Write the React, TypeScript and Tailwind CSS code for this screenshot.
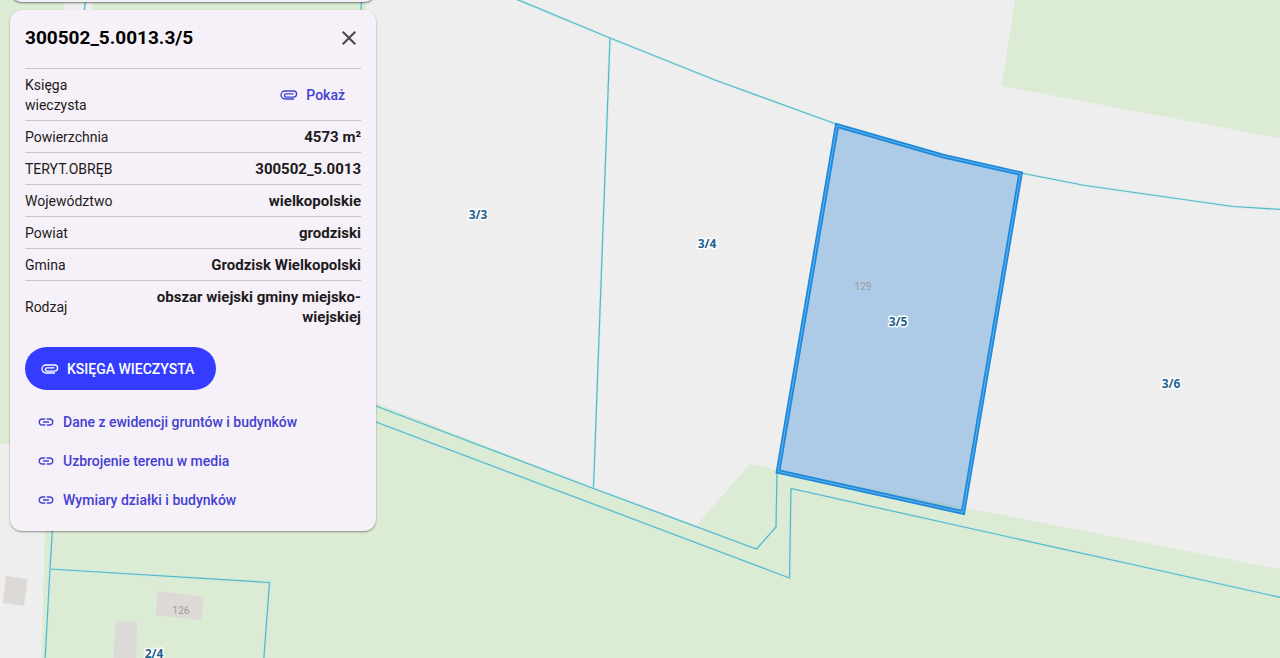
import { MdClose, MdLink } from 'react-icons/md';

const parcel = [
  { label: 'Powierzchnia', value: '4573 m²' },
  { label: 'TERYT.OBRĘB', value: '300502_5.0013' },
  { label: 'Województwo', value: 'wielkopolskie' },
  { label: 'Powiat', value: 'grodziski' },
  { label: 'Gmina', value: 'Grodzisk Wielkopolski' },
  { label: 'Rodzaj', value: 'obszar wiejski gminy miejsko-wiejskiej' },
];

const links = ['Dane z ewidencji gruntów i budynków', 'Uzbrojenie terenu w media', 'Wymiary działki i budynków'];

const boundaries = [
  'M516 -1 L610 38 L715 80 L836 124',
  'M1021 173 L1085 185.5 L1233 206.5 L1290 210',
  'M610 38 L593.5 488',
  'M360 400 L593.5 488.5 L756.5 549 L776 527 L777 472',
  'M360 416 L789.5 578 L791 488.5 L1290 599.5',
  'M53 520 L50 569 L44.5 670',
  'M50 569 L269.5 582.5 L263 670',
  'M86 -2 L84 12',
  'M361.5 -2 L361 12',
];

const parcelLabels = [
  { x: 478, y: 219, text: '3/3' },
  { x: 707, y: 248, text: '3/4' },
  { x: 898, y: 326, text: '3/5' },
  { x: 1171, y: 388, text: '3/6' },
  { x: 154, y: 658, text: '2/4' },
];

const selected = 'M837 125.5 L943 156 L1020.5 173.5 L963 512.5 L778 471.5 Z';

export default function App() {
  return (
    <main className="relative min-h-screen overflow-hidden bg-[#eeeeee] font-[Roboto,sans-serif]">
      <ParcelMap />
      <aside className="relative ml-2.5 flex w-[366px] max-w-full flex-col gap-2 pb-4">
        <div className="-mt-8 h-[34px] rounded-xl bg-[#f6f1f8] shadow-[0_1px_2px_rgba(0,0,0,0.5)]" />
        <ParcelCard />
      </aside>
    </main>
  );
}

function ParcelCard() {
  return (
    <section className="rounded-xl bg-[#f6f1f8] px-[15px] pb-3 pt-3 shadow-[0_1px_2px_rgba(0,0,0,0.4)]">
      <header className="flex items-center justify-between pb-3.5">
        <h1 className="text-[19px] font-bold leading-8 text-black">300502_5.0013.3/5</h1>
        <button type="button" aria-label="Zamknij" className="text-[#49454f]">
          <MdClose size={24} />
        </button>
      </header>

      <table className="w-full border-separate border-spacing-0 text-sm leading-5 text-[#1d1b20]">
        <tbody>
          <tr>
            <th scope="row" className="w-[88px] border-t border-[#c6c1ca] pb-[5px] pt-1.5 text-left font-normal">
              Księga wieczysta
            </th>
            <td className="border-t border-[#c6c1ca] pr-4 text-right">
              <button type="button" className="inline-flex items-center gap-2 align-middle font-medium text-[#4340d2]">
                <Clip />
                Pokaż
              </button>
            </td>
          </tr>
          {parcel.map(({ label, value }) => (
            <tr key={label}>
              <th scope="row" className="border-t border-[#c6c1ca] pb-[5px] pt-1.5 text-left font-normal">
                {label}
              </th>
              <td className="border-t border-[#c6c1ca] pb-[5px] pl-8 pt-1.5 text-right text-[15px] font-bold leading-5">
                {value}
              </td>
            </tr>
          ))}
        </tbody>
      </table>

      <button
        type="button"
        className="mt-[15px] flex h-[43px] items-center gap-2 rounded-full bg-[#343dff] pl-4 pr-[22px] text-sm font-medium text-white"
      >
        <Clip />
        KSIĘGA WIECZYSTA
      </button>

      <ul className="mt-3">
        {links.map((text) => (
          <li key={text}>
            <a href="#" className="flex h-[39px] items-center gap-2 pl-3 text-sm font-medium text-[#4340d2]">
              <MdLink size={18} />
              {text}
            </a>
          </li>
        ))}
      </ul>
    </section>
  );
}

// Thin horizontal paperclip
function Clip() {
  return (
    <svg width="18" height="18" viewBox="0 0 18 18" fill="none" stroke="currentColor" strokeWidth={1.3} aria-hidden="true">
      <path d="M14 13H5A4 4 0 0 1 5 5H13.500A3.100 3.100 0 0 1 13.500 11.200H6A1.650 1.650 0 0 1 6 7.900H13.500" />
    </svg>
  );
}

function ParcelMap() {
  return (
    <svg className="absolute inset-0 h-full w-full" viewBox="0 0 1280 658" preserveAspectRatio="xMinYMin slice">
      {/* Land cover */}
      <g fill="#dbebd4">
        <path d="M0 0 H64 V444 H0 Z" />
        <path d="M92 0 H366 V100 H92 Z" />
        <path d="M1015 0 H1290 V140 L1002 86 Z" />
        <path d="M52 280 L376 403 L695 527 L750 464 L778 470 L966 508 L1290 571 V670 H41 Z" />
      </g>

      {/* Buildings */}
      <g fill="#ddd9d6">
        <path d="M6 576 L27.500 579 L24 606 L3 603 Z" />
        <path d="M157 591 L203.500 596.500 L201 620 L156 615.500 Z" />
        <path d="M115.500 621 L137 622 L136 670 H113 Z" />
      </g>

      {/* Parcel boundaries */}
      <g fill="none">
        {boundaries.map((d) => (
          <g key={d}>
            <path d={d} stroke="#bdf0ea" strokeOpacity={0.5} strokeWidth={3} />
            <path d={d} stroke="#5ab4c6" strokeWidth={1.2} />
          </g>
        ))}
      </g>

      {/* Selected parcel */}
      <path d={selected} fill="#3388d8" fillOpacity={0.35} stroke="#1e88dc" strokeWidth={4.5} />
      <path d={selected} fill="none" stroke="#62b4ea" strokeWidth={1} />

      <g textAnchor="middle" className="fill-[#9b9b9b] font-[Roboto,sans-serif] text-[10px]">
        <text x="863" y="290">129</text>
        <text x="181" y="614">126</text>
      </g>
      <g
        textAnchor="middle"
        stroke="#ffffff"
        strokeWidth={3}
        strokeLinejoin="round"
        paintOrder="stroke"
        className="fill-[#1f6390] font-['Noto_Sans',sans-serif] text-xs font-bold"
      >
        {parcelLabels.map(({ x, y, text }) => (
          <text key={text} x={x} y={y}>{text}</text>
        ))}
      </g>
    </svg>
  );
}
